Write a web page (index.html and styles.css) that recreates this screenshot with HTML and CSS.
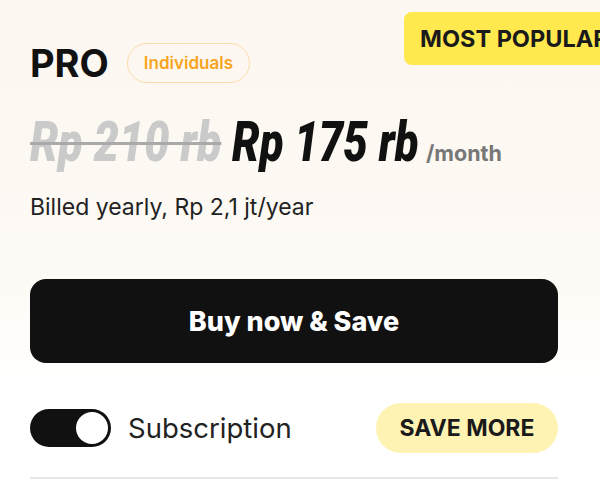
FILE: index.html
```html
<!DOCTYPE html>
<html>
  <head>
    <link rel="stylesheet" href="styles.css">
    <meta charset="utf-8" />
    <meta name="viewport" content="width=device-width, initial-scale=1" />
    <title>Pro plan</title>
  </head>
  <body>
    <div class="card">
      <div class="badge">MOST POPULAR</div>

      <div class="head">
        <h2 class="plan">PRO</h2>
        <span class="tag">Individuals</span>
      </div>

      <div class="price">
        <span class="amount oldPrice"><span class="squeeze">Rp 210 rb</span></span>
        <span class="amount newPrice"><span class="squeeze">Rp 175 rb</span></span>
        <span class="per">/month</span>
      </div>

      <p class="billed">Billed yearly, Rp 2,1 jt/year</p>

      <button class="buy">Buy now &amp; Save</button>

      <div class="options">
        <label class="sub">
          <span class="toggle"><span class="knob"></span></span>
          Subscription
        </label>
        <span class="saveMore">SAVE MORE</span>
      </div>

      <hr class="line" />
    </div>
  </body>
</html>
```

FILE: styles.css
```css
body {
  margin: 0;
  font-family: "Inter", "Noto Sans", sans-serif;
  color: #111;
  overflow: hidden;
  background: linear-gradient(180deg, #fcf7f0 0%, #fdf9f4 50%, #fffdfa 70%, #fff 80%);
}

.card {
  position: relative;
  box-sizing: border-box;
  width: 600px;
  height: 487px;
  padding: 43px 42px 0 30px;
}

/* the card is wider than the frame, so the badge runs off the right edge */
.badge {
  position: absolute;
  top: 12px;
  left: 404px;
  right: 0;
  height: 53px;
  padding-left: 16px;
  overflow: hidden;
  line-height: 53px;
  background: #ffe94e;
  border-radius: 8px 0 0 8px;
  font-size: 23.5px;
  font-weight: 700;
  white-space: nowrap;
  color: #1a1a1a;
}

.head {
  display: flex;
  align-items: center;
  gap: 18px;
  height: 40px;
}

.plan {
  margin: 0;
  font-size: 38px;
  font-weight: 700;
  line-height: 1;
}

.tag {
  display: flex;
  align-items: center;
  box-sizing: border-box;
  height: 40px;
  padding: 0 16px;
  border: 1px solid #fcdcaa;
  border-radius: 20px;
  font-size: 17px;
  font-weight: 600;
  color: #f7a420;
}

.price {
  display: flex;
  align-items: baseline;
  margin-top: 33px;
  height: 52px;
  line-height: 52px;
  white-space: nowrap;
}

.amount {
  display: inline-block;
  font-family: "Roboto", "Liberation Sans", sans-serif;
  font-size: 56px;
  font-weight: 900;
  font-style: italic;
}

.squeeze {
  display: inline-block;
  transform: scaleX(0.78);
  transform-origin: left center;
}

.oldPrice {
  width: 192px;
  margin-right: 10px;
  color: #cacaca;
}

.oldPrice .squeeze {
  transform: scaleX(0.8);
  text-decoration: line-through;
  text-decoration-color: #a9a9a9;
  text-decoration-thickness: 3px;
}

.newPrice {
  width: 190px;
}

.per {
  margin-left: 4px;
  font-size: 21.5px;
  line-height: 22px;
  font-weight: 700;
  color: #777;
}

.billed {
  margin: 25px 0 0;
  font-size: 23px;
  line-height: 28px;
  color: #222;
}

.buy {
  display: block;
  width: 100%;
  height: 84px;
  margin-top: 58px;
  border: none;
  border-radius: 16px;
  background: #111;
  color: #fff;
  font-family: "Inter", sans-serif;
  font-size: 27px;
  font-weight: 800;
}

.options {
  display: flex;
  justify-content: space-between;
  align-items: center;
  margin-top: 40px;
  height: 50px;
}

.sub {
  display: flex;
  align-items: center;
  gap: 17px;
  font-size: 27.5px;
  color: #222;
}

.toggle {
  display: flex;
  justify-content: flex-end;
  align-items: center;
  box-sizing: border-box;
  width: 81px;
  height: 38px;
  padding: 3px;
  border-radius: 19px;
  background: #111;
}

.knob {
  width: 32px;
  height: 32px;
  border-radius: 50%;
  background: #fff;
}

.saveMore {
  display: flex;
  align-items: center;
  justify-content: center;
  width: 182px;
  height: 50px;
  border-radius: 25px;
  background: #fef3b3;
  font-size: 23px;
  font-weight: 700;
  color: #1a1a1a;
}

.line {
  margin: 24px 0 0;
  border: none;
  height: 2px;
  background: #e6e6e6;
}
```
